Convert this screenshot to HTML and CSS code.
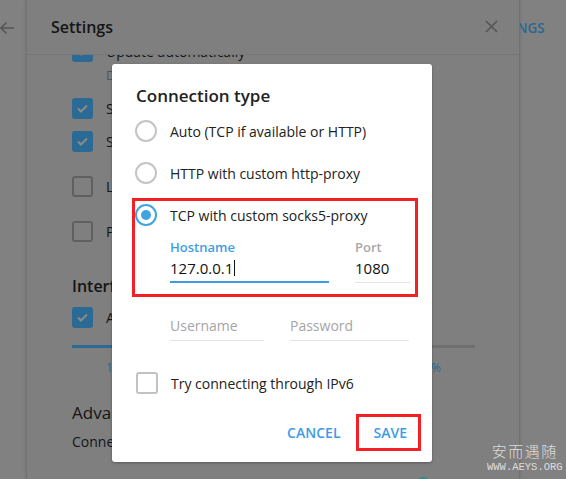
FILE: index.html
```html
<!DOCTYPE html>
<html>
<head>
<meta charset="utf-8">
<link rel="stylesheet" href="styles.css">
</head>
<body>
<div class="screen">
  <div class="side side-left">
    <svg class="back" width="16" height="14" viewBox="0 0 16 14"><path d="M15 7H2M7.5 1.5L2 7l5.5 5.5" fill="none" stroke="#565656" stroke-width="1.6"/></svg>
  </div>
  <div class="panel">
    <div class="panel-head">
      <span class="panel-title">Settings</span>
      <svg class="close" width="13" height="13" viewBox="0 0 13 13"><path d="M1 1l11 11M12 1L1 12" stroke="#555" stroke-width="1.6"/></svg>
    </div>
    <div class="panel-body">
      <div class="scroll">
        <div class="row row-first"><span class="cb on"><svg viewBox="0 0 21 21"><path d="M6 10.5l3 3 6-6" fill="none" stroke="#8a8a8a" stroke-width="2"/></svg></span><span class="row-text">Update automatically</span></div>
        <div class="sub">Download version 1.2.17</div>
        <div class="row row-s1"><span class="cb on"><svg viewBox="0 0 21 21"><path d="M6 10.5l3 3 6-6" fill="none" stroke="#8a8a8a" stroke-width="2"/></svg></span><span class="row-text">Send by Enter</span></div>
        <div class="row row-s2"><span class="cb on"><svg viewBox="0 0 21 21"><path d="M6 10.5l3 3 6-6" fill="none" stroke="#8a8a8a" stroke-width="2"/></svg></span><span class="row-text">Show notifications</span></div>
        <div class="row row-l"><span class="cb"></span><span class="row-text">Launch at startup</span></div>
        <div class="row row-p"><span class="cb"></span><span class="row-text">Put in the tray</span></div>
        <div class="section">Interface Scale</div>
        <div class="row row-a"><span class="cb on"><svg viewBox="0 0 21 21"><path d="M6 10.5l3 3 6-6" fill="none" stroke="#8a8a8a" stroke-width="2"/></svg></span><span class="row-text">Auto</span></div>
        <div class="slider"><span class="slider-fill"></span></div>
        <div class="scale-labels"><span>100%</span><span>300%</span></div>
        <div class="section section-adv">Advanced Settings</div>
        <div class="conn">Connection type: TCP with proxy</div>
      </div>
      <span class="fab"></span>
    </div>
  </div>
  <div class="side side-right"><span class="tab">NGS</span></div>
</div>

<div class="dialog">
  <div class="dlg-title">Connection type</div>
  <div class="radio-row"><span class="radio"></span><span>Auto (TCP if available or HTTP)</span></div>
  <div class="radio-row"><span class="radio"></span><span>HTTP with custom http-proxy</span></div>
  <div class="radio-row"><span class="radio radio-on"></span><span>TCP with custom socks5-proxy</span></div>
  <div class="fields">
    <div class="field field-host">
      <div class="field-label label-active">Hostname</div>
      <div class="field-input input-active">127.0.0.1<span class="caret"></span></div>
    </div>
    <div class="field field-port">
      <div class="field-label">Port</div>
      <div class="field-input">1080</div>
    </div>
  </div>
  <div class="fields fields-auth">
    <div class="field field-user"><div class="field-input placeholder">Username</div></div>
    <div class="field field-pass"><div class="field-input placeholder">Password</div></div>
  </div>
  <div class="check-row"><span class="dcb"></span><span>Try connecting through IPv6</span></div>
  <div class="buttons">
    <span class="btn">CANCEL</span>
    <span class="btn">SAVE</span>
  </div>
  <span class="mark mark-proxy"></span>
  <span class="mark mark-save"></span>
</div>

<div class="watermark">
  <div class="wm-cn">安而遇随</div>
  <div class="wm-en">WWW.AEYS.ORG</div>
</div>
</body>
</html>
```

FILE: styles.css
```css
html, body {
  margin: 0;
  padding: 0;
}
body {
  width: 566px;
  height: 479px;
  overflow: hidden;
  background: #808080;
  font-family: "Open Sans", "Noto Sans", sans-serif;
  position: relative;
}
.screen {
  display: flex;
  height: 479px;
}
.side {
  background: #818181;
}
.side-left {
  width: 26px;
  flex: none;
}
.back {
  display: block;
  margin: 21px 0 0 -1px;
}
.side-right {
  flex: 1;
  overflow: hidden;
  white-space: nowrap;
}
.tab {
  display: block;
  margin: 17px 0 0 -3px;
  font-size: 13.5px;
  font-weight: 600;
  color: #2a6892;
  line-height: 22px;
}
.panel {
  width: 492px;
  flex: none;
  background: #7f7f7f;
  border-left: 1px solid #727272;
  border-right: 1px solid #727272;
  display: flex;
  flex-direction: column;
  box-shadow: 0 0 3px rgba(0,0,0,0.15);
  z-index: 1;
}
.panel-head {
  height: 55px;
  box-sizing: border-box;
  border-bottom: 1px solid #767676;
  display: flex;
  align-items: center;
  justify-content: space-between;
  padding: 0 21px 1px 24px;
  flex: none;
}
.panel-title {
  font-size: 16px;
  font-weight: 600;
  color: #151515;
}
.close {
  display: block;
}
.panel-body {
  flex: 1;
  overflow: hidden;
  position: relative;
}
.scroll {
  margin-top: -15px;
  padding-left: 45px;
  color: #141414;
  font-size: 14px;
}
.row {
  display: flex;
  align-items: center;
  height: 22px;
  gap: 13px;
  white-space: nowrap;
}
.cb {
  width: 21px;
  height: 21px;
  box-sizing: border-box;
  border-radius: 3px;
  border: 2px solid #606060;
  flex: none;
}
.cb.on {
  background: #2b6a94;
  border-color: #2b6a94;
}
.cb svg {
  display: block;
  width: 21px;
  height: 21px;
  margin: -2px;
}
.sub {
  margin: 4px 0 0 34px;
  font-size: 13px;
  line-height: 18px;
  color: #555;
}
.row-s1 { margin-top: 13px; }
.row-s2 { margin-top: 11px; }
.row-l { margin-top: 23px; }
.row-p { margin-top: 23px; }
.section {
  margin-top: 33px;
  font-size: 16px;
  font-weight: 600;
  line-height: 22px;
  color: #141414;
}
.row-a { margin-top: 9px; }
.slider {
  margin-top: 17px;
  height: 3px;
  width: 403px;
  background: #6f6f6f;
  display: flex;
}
.slider-fill {
  width: 140px;
  background: #2b6a94;
}
.scale-labels {
  margin-top: 12px;
  width: 369px;
  box-sizing: border-box;
  padding-left: 34px;
  display: flex;
  justify-content: space-between;
  font-size: 12px;
  line-height: 16px;
  color: #2b6a94;
}
.section-adv {
  margin-top: 26px;
  font-weight: 400;
  font-size: 17px;
}
.conn {
  margin-top: 7px;
  line-height: 22px;
}
.fab {
  position: absolute;
  left: 388px;
  top: 422px;
  width: 16px;
  height: 16px;
  border-radius: 50%;
  background: #2a8f7d;
}

/* dialog */
.dialog {
  position: absolute;
  left: 112px;
  top: 64px;
  width: 320px;
  height: 398px;
  background: #fff;
  border-radius: 3px;
  box-shadow: 0 1px 3px rgba(0,0,0,0.3);
  box-sizing: border-box;
  padding: 20px 0 0 23px;
  z-index: 2;
  color: #222;
  font-size: 14px;
}
.dlg-title {
  font-size: 17px;
  font-weight: 600;
  line-height: 24px;
  margin-left: 1px;
  color: #222;
}
.radio-row {
  display: flex;
  align-items: center;
  gap: 13px;
  height: 42px;
  white-space: nowrap;
}
.dlg-title + .radio-row { margin-top: 2px; }
.radio {
  width: 22px;
  height: 22px;
  box-sizing: border-box;
  border-radius: 50%;
  border: 2px solid #c4c4c4;
  flex: none;
  display: flex;
  align-items: center;
  justify-content: center;
}
.radio-on {
  border-color: #40a3e4;
}
.radio-on::after {
  content: "";
  width: 10px;
  height: 10px;
  border-radius: 50%;
  background: #40a3e4;
}
.fields {
  display: flex;
  gap: 26px;
  padding-left: 35px;
}
.field-label {
  margin-top: 2px;
  font-size: 13px;
  font-weight: 600;
  line-height: 18px;
  color: #a8a8a8;
}
.label-active {
  color: #3f9ee3;
}
.field-input {
  margin-top: 1px;
  font-size: 15px;
  line-height: 22px;
  height: 22px;
  padding-bottom: 3px;
  border-bottom: 1px solid #e4e4e4;
  color: #111;
  white-space: nowrap;
  display: flex;
  align-items: center;
}
.input-active {
  padding-bottom: 2px;
  border-bottom: 2px solid #3d9be6;
}
.caret {
  width: 1px;
  height: 16px;
  background: #111;
  margin-left: 1px;
}
.field-host { width: 159px; }
.field-port { width: 55px; }
.fields-auth { margin-top: 31px; }
.field-user { width: 94px; }
.field-pass { width: 119px; }
.placeholder {
  color: #a5a5a5;
  font-size: 14px;
}
.check-row {
  margin-top: 31px;
  display: flex;
  align-items: center;
  gap: 13px;
  height: 22px;
  white-space: nowrap;
}
.dcb {
  width: 22px;
  height: 22px;
  box-sizing: border-box;
  border: 2px solid #c2c2c2;
  border-radius: 3px;
  margin-left: 1px;
  flex: none;
}
.buttons {
  margin-top: 21px;
  display: flex;
  justify-content: flex-end;
  gap: 9px;
  padding-right: 13px;
}
.btn {
  height: 36px;
  line-height: 36px;
  padding: 0 12px;
  font-size: 14px;
  font-weight: 600;
  color: #3d9be6;
}
.mark {
  position: absolute;
  border: 3px solid #f32026;
  box-sizing: border-box;
}
.mark-proxy {
  left: 20px;
  top: 134px;
  width: 286px;
  height: 99px;
}
.mark-save {
  left: 244px;
  top: 350px;
  width: 65px;
  height: 37px;
}

/* watermark */
.watermark {
  position: absolute;
  left: 487px;
  top: 442px;
  z-index: 3;
  color: rgba(240,240,240,0.85);
  text-align: center;
}
.wm-cn {
  font-family: "Noto Sans CJK SC", sans-serif;
  font-size: 15px;
  line-height: 18px;
  letter-spacing: 1.5px;
  font-weight: 300;
}
.wm-en {
  font-family: "Liberation Mono", monospace;
  font-size: 10.5px;
  line-height: 14px;
}
```
